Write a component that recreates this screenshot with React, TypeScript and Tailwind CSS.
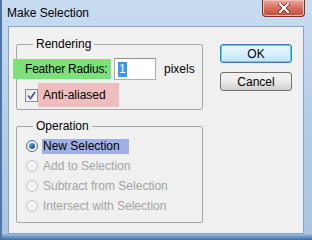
import React from 'react'

const font = { fontFamily: '"Liberation Sans", Arial, sans-serif' }

const Radio = ({ checked, disabled }: { checked?: boolean; disabled?: boolean }) => (
  <span
    className={`w-[12px] h-[12px] rounded-full border flex items-center justify-center shrink-0 ${
      disabled ? 'border-[#c4c4c4] bg-[#f4f4f4]' : 'border-[#5b6b80] bg-gradient-to-br from-[#e4e4e4] to-[#ffffff]'
    }`}
  >
    {checked && <span className="w-[6px] h-[6px] rounded-full bg-gradient-to-br from-[#6fb3ea] to-[#0b3c8f]" />}
  </span>
)

const RadioRow = ({ label, checked, disabled }: { label: string; checked?: boolean; disabled?: boolean }) => (
  <div className="flex items-center h-[20px] ml-[9px]">
    <Radio checked={checked} disabled={disabled} />
    <span
      className={`ml-[4px] pl-[1px] h-[15px] flex items-center leading-[15px] whitespace-nowrap ${
        checked ? 'bg-[#9fb0e6] w-[87px] text-black' : disabled ? 'text-[#a3a3a3]' : 'text-black'
      }`}
    >
      {label}
    </span>
  </div>
)

const Button = ({ children, focused }: { children: React.ReactNode; focused?: boolean }) => (
  <button
    className={`w-[72px] h-[19px] rounded-[3px] border flex items-center justify-center text-[12px] text-black leading-none ${
      focused
        ? 'border-[#3c7fb1] bg-gradient-to-b from-[#eaf6fd] via-[#d9f0fc] to-[#bee6fd] shadow-[inset_0_0_0_1px_#48d6f8]'
        : 'border-[#707070] bg-gradient-to-b from-[#f2f2f2] via-[#ebebeb] to-[#cfcfcf]'
    }`}
  >
    {children}
  </button>
)

export default function App() {
  return (
    <div
      className="w-[312px] h-[240px] overflow-hidden bg-gradient-to-b from-[#c9ddf1] via-[#b4cde8] to-[#a9c4e2] border-l-[2px] border-[#4d77a6] flex flex-col"
      style={font}
    >
      <div className="h-[26px] flex items-start justify-between shrink-0">
        <span className="text-[12px] text-black ml-[5px] mt-[6px] leading-[14px]">Make Selection</span>
        <button className="mr-[7px] w-[43px] h-[17px] rounded-b-[4px] border border-t-0 border-[#7b3025] bg-gradient-to-b from-[#e9aa9d] via-[#d7705d] to-[#c24a34] flex items-center justify-center shadow-[inset_0_0_0_1px_#f1c2b6]">
          <svg width="12" height="10" viewBox="0 0 12 10">
            <path d="M2 1 L10 9 M10 1 L2 9" stroke="#5a2018" strokeWidth="3.6" strokeLinecap="square" />
            <path d="M2 1 L10 9 M10 1 L2 9" stroke="#ffffff" strokeWidth="2.2" strokeLinecap="square" />
          </svg>
        </button>
      </div>
      <div className="ml-[6px] w-[296px] h-[208px] bg-[#f0f0f0] border border-[#8aa4c2] flex items-start text-[12px] text-black shrink-0">
        <div className="pl-[7px] pt-[10px] flex flex-col">
          <fieldset className="w-[187px] h-[73px] border border-[#a8a8a8] rounded-[2px]">
            <legend className="ml-[16px] px-[3px] leading-[14px]">Rendering</legend>
            <div className="flex items-center mt-[7px]">
              <div className="ml-[-4px] w-[98px] h-[20px] bg-[#7ae27a] pl-[12px] flex items-center whitespace-nowrap shrink-0 tracking-[-0.2px]">
                Feather Radius:
              </div>
              <div className="ml-[3px] w-[42px] h-[22px] bg-white border border-[#abadb3] border-t-[#8e8f8f] flex items-center pl-[3px] shrink-0">
                <span className="bg-[#3399ff] text-white px-[1px] leading-[15px]">1</span>
              </div>
              <span className="ml-[8px]">pixels</span>
            </div>
            <div className="flex items-center mt-[3px] ml-[8px]">
              <span className="w-[13px] h-[13px] border border-[#8e8f8f] bg-gradient-to-br from-[#e6e6e6] to-[#ffffff] flex items-center justify-center shrink-0">
                <svg width="9" height="9" viewBox="0 0 9 9">
                  <path d="M1 4.5 L3.5 7.5 L8 1" fill="none" stroke="#4a5f97" strokeWidth="1.8" />
                </svg>
              </span>
              <div className="w-[81px] h-[24px] bg-[#eebdbd] pl-[5px] flex items-center whitespace-nowrap">Anti-aliased</div>
            </div>
          </fieldset>
          <fieldset className="mt-[9px] w-[187px] h-[104px] border border-[#a8a8a8] rounded-[2px]">
            <legend className="ml-[16px] px-[3px] leading-[14px]">Operation</legend>
            <div className="mt-[3px] flex flex-col">
              <RadioRow label="New Selection" checked />
              <RadioRow label="Add to Selection" disabled />
              <RadioRow label="Subtract from Selection" disabled />
              <RadioRow label="Intersect with Selection" disabled />
            </div>
          </fieldset>
        </div>
        <div className="ml-[17px] mt-[17px] flex flex-col gap-[9px]">
          <Button focused>OK</Button>
          <Button>Cancel</Button>
        </div>
      </div>
      <div className="flex-1 bg-gradient-to-b from-[#9dbbdd] to-[#3f6fa6]" />
    </div>
  )
}
